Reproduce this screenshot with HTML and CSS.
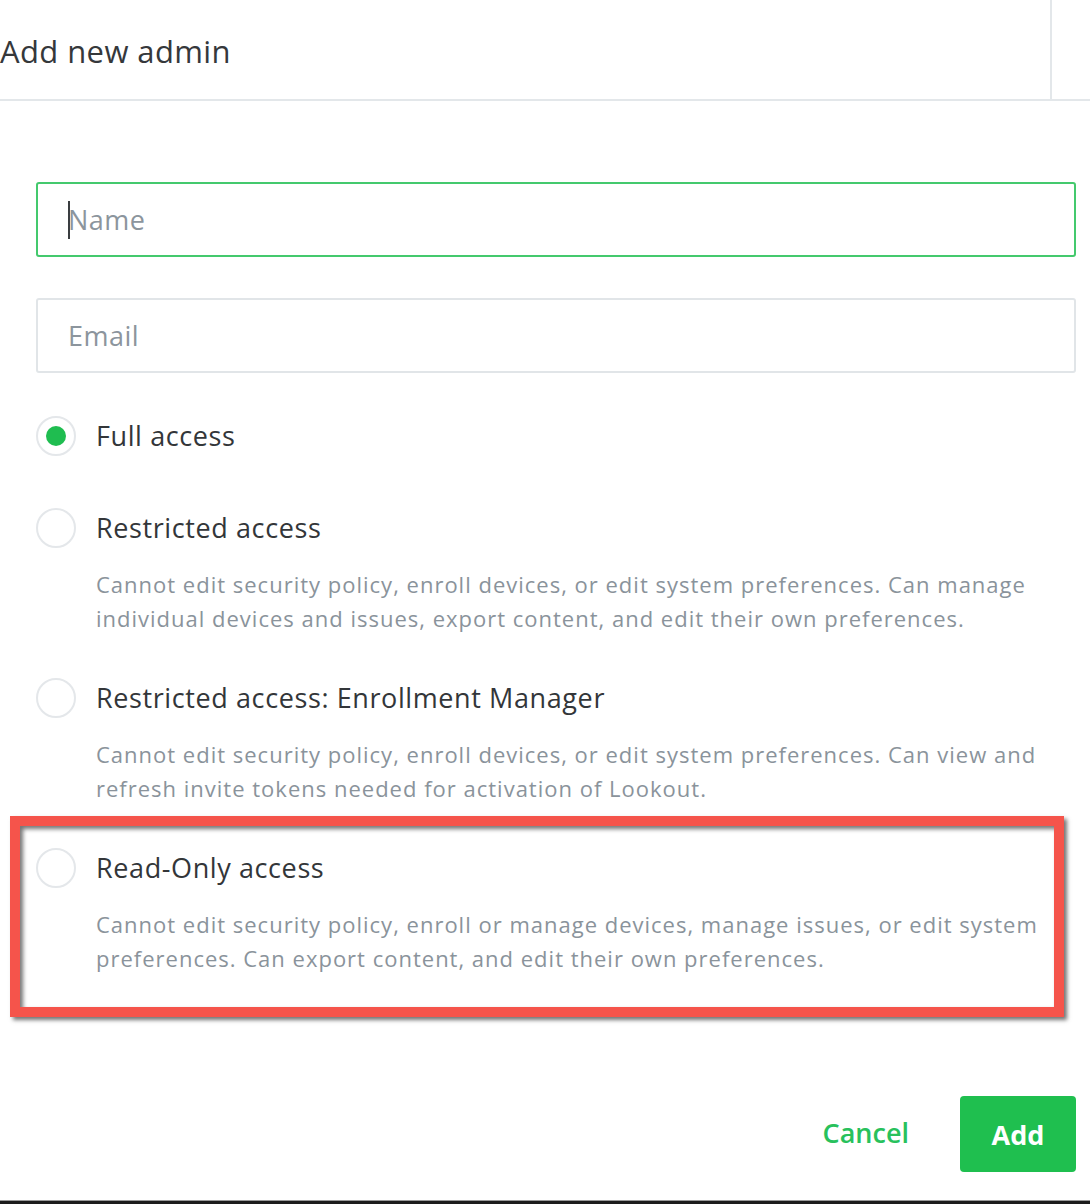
FILE: index.html
```html
<!DOCTYPE html>
<html lang="en">
<head>
<meta charset="utf-8">
<title>Add new admin</title>
<link rel="stylesheet" href="styles.css">
</head>
<body>
<div class="page">
  <header class="header">
    <h1 class="title">Add new admin</h1>
    <div class="header-side"></div>
  </header>
  <form class="form">
    <div class="field focused"><span class="caret"></span><span class="placeholder">Name</span></div>
    <div class="field"><span class="placeholder">Email</span></div>

    <div class="option plain">
      <div class="radio checked"><span class="dot"></span></div>
      <div class="label">Full access</div>
    </div>
    <div class="option">
      <div class="radio"></div>
      <div class="label">Restricted access</div>
      <p class="desc">Cannot edit security policy, enroll devices, or edit system preferences. Can manage individual devices and issues, export content, and edit their own preferences.</p>
    </div>
    <div class="option">
      <div class="radio"></div>
      <div class="label">Restricted access: Enrollment Manager</div>
      <p class="desc">Cannot edit security policy, enroll devices, or edit system preferences. Can view and refresh invite tokens needed for activation of Lookout.</p>
    </div>
    <div class="option">
      <div class="radio"></div>
      <div class="label">Read-Only access</div>
      <p class="desc">Cannot edit security policy, enroll or manage devices, manage issues, or edit system preferences. Can export content, and edit their own preferences.</p>
    </div>

    <div class="actions">
      <span class="cancel">Cancel</span>
      <span class="add">Add</span>
    </div>
  </form>
  <div class="highlight"></div>
  <div class="bottom-bar"></div>
</div>
</body>
</html>
```
FILE: styles.css
```css
html, body {
  margin: 0;
  padding: 0;
  background: #ffffff;
}
.page {
  position: relative;
  width: 1090px;
  height: 1204px;
  overflow: hidden;
  font-family: "Open Sans", "Noto Sans", sans-serif;
  color: #333639;
}
.header {
  display: flex;
  height: 99px;
  border-bottom: 2px solid #e3e7ea;
}
.title {
  flex: 1;
  margin: 0;
  padding-top: 30px;
  font-size: 31px;
  font-weight: 400;
  line-height: 42px;
  letter-spacing: 0.4px;
  color: #35383b;
}
.header-side {
  width: 38px;
  border-left: 2px solid #e3e7ea;
}
.form {
  padding: 81px 14px 0 36px;
}
.field {
  box-sizing: border-box;
  height: 75px;
  border: 2px solid #e1e5e8;
  border-radius: 3px;
  margin-bottom: 41px;
  display: flex;
  align-items: center;
  padding-left: 30px;
}
.field + .field {
  margin-bottom: 43px;
}
.field.focused {
  border-color: #44c96d;
}
.caret {
  width: 2px;
  height: 38px;
  background: #3a3d40;
  margin-right: -2px;
}
.placeholder {
  font-size: 27px;
  letter-spacing: 0.5px;
  color: #8c959d;
}
.option {
  display: grid;
  grid-template-columns: 40px 1fr;
  column-gap: 20px;
  margin-top: 2px;
}
.option.plain {
  margin-bottom: 52px;
}
.radio {
  box-sizing: border-box;
  width: 40px;
  height: 40px;
  border: 2px solid #e4e7ea;
  border-radius: 50%;
  display: flex;
  align-items: center;
  justify-content: center;
}
.dot {
  width: 20px;
  height: 20px;
  border-radius: 50%;
  background: #1fbd50;
}
.label {
  font-size: 27px;
  line-height: 40px;
  letter-spacing: 0.6px;
  color: #333639;
}
.desc {
  grid-column: 2;
  margin: 19px 0 41px;
  font-size: 22px;
  line-height: 34px;
  letter-spacing: 1px;
  color: #8a939b;
  padding-right: 10px;
}
.actions {
  display: flex;
  justify-content: flex-end;
  align-items: center;
  gap: 51px;
  margin-top: 80px;
}
.cancel {
  font-size: 27px;
  font-weight: 600;
  color: #28c15c;
  margin-top: -3px;
}
.add {
  box-sizing: border-box;
  width: 116px;
  height: 76px;
  display: flex;
  align-items: center;
  justify-content: center;
  border-radius: 4px;
  background: #1fbf4f;
  color: #ffffff;
  font-size: 27px;
  font-weight: 700;
}
.highlight {
  position: absolute;
  left: 10px;
  top: 816px;
  width: 1054px;
  height: 201px;
  box-sizing: border-box;
  border: 10px solid #f5544b;
  box-shadow: 3px 3px 4px rgba(0, 0, 0, 0.55), inset 3px 3px 4px rgba(0, 0, 0, 0.55);
  pointer-events: none;
}
.bottom-bar {
  position: absolute;
  left: 0;
  bottom: 0;
  width: 100%;
  height: 3px;
  background: #1c1c1c;
  border-top: 1px solid #9a9a9a;
}
```
